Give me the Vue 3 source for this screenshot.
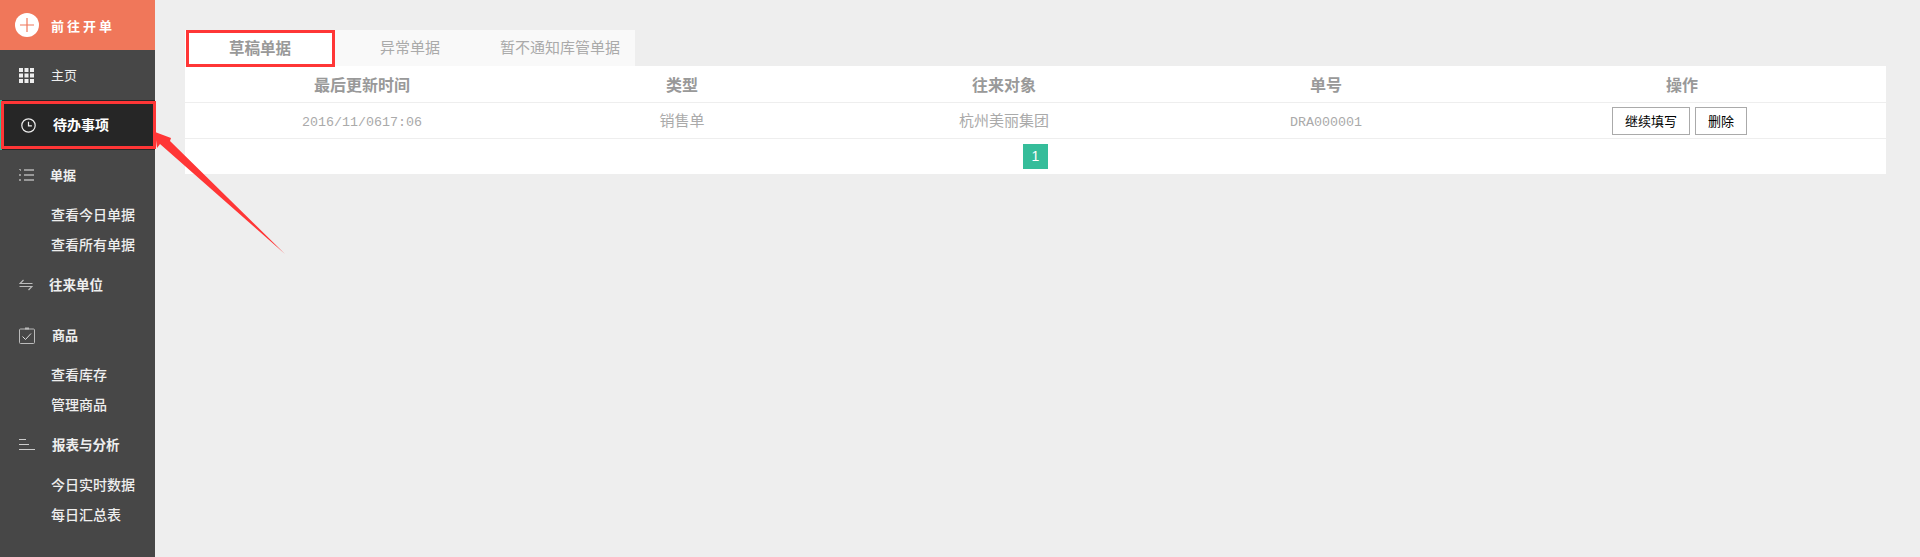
<template>
  <div class="page">
    <aside class="sidebar">
      <a class="new-order">
        <svg class="plus" width="24" height="24" viewBox="0 0 24 24">
          <circle cx="12" cy="12" r="12" fill="#fff" />
          <path d="M12 5v14M5 12h14" stroke="#f0775a" stroke-width="1.2" />
        </svg>
        <span>前往开单</span>
      </a>

      <a class="nav-item home">
        <svg class="icon" width="15" height="15" viewBox="0 0 15 15" fill="#eee">
          <rect v-for="c in gridCells" :key="c.x + '-' + c.y" :x="c.x" :y="c.y" width="4" height="4" />
        </svg>
        <span>主页</span>
      </a>

      <a class="nav-item active">
        <svg class="icon" width="15" height="15" viewBox="0 0 15 15" fill="none" stroke="#eee">
          <circle cx="7.5" cy="7.5" r="6.7" stroke-width="1.2" />
          <path d="M7.5 3.8v4h3.4" stroke-width="1.2" />
        </svg>
        <span>待办事项</span>
      </a>

      <a class="nav-item bills">
        <svg class="icon" width="15" height="12" viewBox="0 0 15 12" fill="#999">
          <rect x="5" y="0" width="10" height="2" />
          <rect x="5" y="5" width="10" height="2" />
          <rect x="5" y="10" width="10" height="2" />
          <rect x="0" y="0" width="2" height="1" />
          <rect x="1" y="1" width="1" height="1" />
          <rect x="0" y="5" width="2" height="2" />
          <rect x="0" y="10" width="2" height="2" />
        </svg>
        <span>单据</span>
      </a>
      <a v-for="t in billLinks" :key="t" class="sub-item">{{ t }}</a>

      <a class="nav-item partners">
        <svg class="icon" width="14" height="12" viewBox="0 0 14 12" fill="none" stroke="#bbb" stroke-width="1.2">
          <path d="M13.5 4.5H1L4.5 1" />
          <path d="M0.5 7.5H13L9.5 11" />
        </svg>
        <span>往来单位</span>
      </a>

      <a class="nav-item goods">
        <svg class="icon" width="16" height="17" viewBox="0 0 16 17" fill="none" stroke="#bbb">
          <rect x="0.5" y="2" width="15" height="14.5" rx="1" />
          <path d="M6 1.5h4" stroke-width="2" />
          <path d="M3.5 9.5l3 3 5.5-6" stroke="#ddd" />
        </svg>
        <span>商品</span>
      </a>
      <a v-for="t in goodsLinks" :key="t" class="sub-item">{{ t }}</a>

      <a class="nav-item reports">
        <svg class="icon" width="16" height="12" viewBox="0 0 16 12" fill="none" stroke="#ccc">
          <path d="M0 0.5h7M0 5.5h10M0 10.5h16" />
        </svg>
        <span>报表与分析</span>
      </a>
      <a v-for="t in reportLinks" :key="t" class="sub-item">{{ t }}</a>
    </aside>

    <main class="content">
      <div class="tabs">
        <div class="tab current">草稿单据</div>
        <div class="tab">异常单据</div>
        <div class="tab">暂不通知库管单据</div>
      </div>

      <div class="panel">
        <div class="row head">
          <div v-for="h in headers" :key="h">{{ h }}</div>
        </div>
        <div class="row body">
          <div class="mono">2016/11/0617:06</div>
          <div class="cell">销售单</div>
          <div class="cell">杭州美丽集团</div>
          <div class="mono">DRA000001</div>
          <div class="actions">
            <button>继续填写</button>
            <button>删除</button>
          </div>
        </div>
        <div class="pager">
          <span class="page-no">1</span>
        </div>
      </div>
    </main>

    <!-- annotation arrow drawn on top of the screenshot -->
    <svg class="arrow" width="300" height="260" viewBox="0 0 300 260">
      <polygon points="155,132 171,138 170,141 285,254 160,144 157,148" fill="#ff3636" />
    </svg>
  </div>
</template>

<script setup>
const gridCells = [];
for (const y of [0, 5.5, 11]) {
  for (const x of [0, 5.5, 11]) gridCells.push({ x, y });
}

const billLinks = ["查看今日单据", "查看所有单据"];
const goodsLinks = ["查看库存", "管理商品"];
const reportLinks = ["今日实时数据", "每日汇总表"];
const headers = ["最后更新时间", "类型", "往来对象", "单号", "操作"];
</script>

<style>
html,
body {
  margin: 0;
  background: #eeeeee;
}
</style>

<style scoped>
.page {
  position: relative;
  display: flex;
  min-height: 557px;
  font-family: "Noto Sans CJK SC", "Liberation Sans", sans-serif;
  background: #eeeeee;
}

.sidebar {
  width: 155px;
  flex-shrink: 0;
  background: #474747;
  color: #eeeeee;
  font-size: 14px;
}

.new-order {
  display: flex;
  align-items: center;
  height: 50px;
  padding-left: 15px;
  box-sizing: border-box;
  background: #f0775a;
  color: #fff;
  font-size: 13px;
  font-weight: 700;
  letter-spacing: 3px;
}

.new-order span {
  margin-left: 12px;
}

.nav-item {
  position: relative;
  display: flex;
  align-items: center;
  height: 50px;
  box-sizing: border-box;
  padding-left: 19px;
  font-weight: 700;
}

.nav-item span {
  margin-bottom: 2px;
}

.icon {
  flex-shrink: 0;
}

.home {
  font-size: 13px;
  font-weight: 400;
}
.home span {
  margin-left: 17px;
}

.active {
  background: #262626;
  color: #fff;
  border-left: 2px solid #35bd9a;
  padding-left: 19px;
}
.active span {
  margin-left: 17px;
}
/* red annotation box round the active item */
.active::after {
  content: "";
  position: absolute;
  left: -1px;
  top: 1px;
  width: 155px;
  height: 48px;
  box-sizing: border-box;
  border: 3px solid #ff3636;
}

.bills {
  font-size: 13px;
}
.bills span {
  margin-left: 16px;
}

.partners {
  font-size: 13.5px;
}
.partners span {
  margin-left: 16px;
}

.goods {
  font-size: 13px;
}
.goods span {
  margin-left: 17px;
}

.reports {
  font-size: 13.5px;
}
.reports span {
  margin-left: 17px;
}

.sub-item {
  display: flex;
  align-items: center;
  height: 30px;
  box-sizing: border-box;
  padding: 0 0 2px 51px;
  font-weight: 500;
}

.content {
  flex: 1;
  padding: 30px 34px 0 30px;
  min-width: 0;
}

.tabs {
  display: flex;
  width: 450px;
  height: 36px;
  background: #f9f9f9;
}

.tab {
  position: relative;
  width: 150px;
  line-height: 34px;
  text-align: center;
  font-size: 15px;
  color: #aaaaaa;
}

.tab.current {
  background: #fff;
  color: #999999;
  font-size: 15.5px;
  font-weight: 700;
}
.tab.current::after {
  content: "";
  position: absolute;
  left: 1px;
  top: 0;
  right: 0;
  height: 37px;
  box-sizing: border-box;
  border: 3px solid #ff3636;
}

.panel {
  background: #fff;
}

.row {
  display: grid;
  grid-template-columns: 354px 286px 358px 286px 1fr;
  align-items: center;
  text-align: center;
  border-bottom: 1px solid #eeeeee;
}

.head {
  height: 37px;
  box-sizing: border-box;
  font-size: 16px;
  font-weight: 700;
  color: #999999;
}

.head div:last-child {
  padding-left: 9px;
}

.body {
  height: 36px;
  box-sizing: border-box;
  font-size: 15px;
  color: #aaaaaa;
}

.cell {
  padding-bottom: 2px;
}

.mono {
  padding-top: 3px;
  font-family: "Liberation Mono", monospace;
  font-size: 13.33px;
}

.actions {
  display: flex;
  justify-content: center;
  gap: 5px;
  padding-left: 4px;
}

.actions button {
  height: 28px;
  padding: 0 12px;
  box-sizing: border-box;
  background: #fff;
  border: 1px solid #aaaaaa;
  border-radius: 0;
  font-family: inherit;
  font-size: 13px;
  color: #000;
}

.pager {
  display: flex;
  justify-content: center;
  padding: 5px 0;
}

.page-no {
  width: 25px;
  height: 25px;
  line-height: 25px;
  text-align: center;
  background: #35bd9a;
  color: #fff;
  font-family: "Liberation Sans", sans-serif;
  font-size: 14px;
}

.arrow {
  position: absolute;
  left: 0;
  top: 0;
  pointer-events: none;
}
</style>
